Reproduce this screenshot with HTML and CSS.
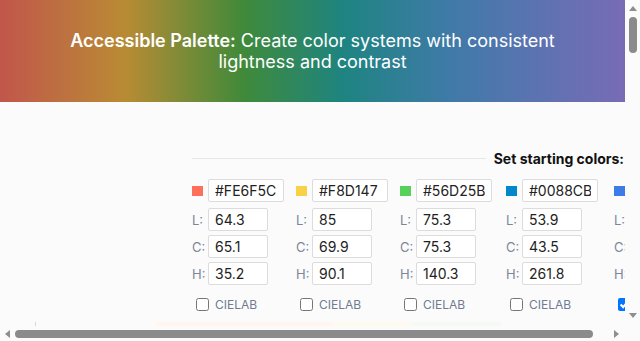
FILE: index.html
```html
<!DOCTYPE html>
<html lang="en">
<head>
  <meta charset="UTF-8" />
  <meta name="viewport" content="width=device-width, initial-scale=1.0"/>
  <title>Accessible Palette</title>
  <link rel="stylesheet" href="styles.css">
</head>
<body>
<div class="app">

  <header class="hero">
    <h1><strong>Accessible Palette:</strong> Create color systems with consistent lightness and contrast</h1>
  </header>

  <main class="page">
    <div class="section-head">
      <div class="rule"></div>
      <h2>Set starting colors:</h2>
    </div>

    <div class="colors">
      <div class="color">
        <div class="hex-row">
          <span class="swatch" style="background:#FE6F5C"></span>
          <input class="hex" value="#FE6F5C" />
        </div>
        <div class="field"><label>L:</label><input value="64.3" /></div>
        <div class="field"><label>C:</label><input value="65.1" /></div>
        <div class="field"><label>H:</label><input value="35.2" /></div>
        <label class="lab"><input type="checkbox" /> CIELAB</label>
      </div>
      <div class="color">
        <div class="hex-row">
          <span class="swatch" style="background:#F8D147"></span>
          <input class="hex" value="#F8D147" />
        </div>
        <div class="field"><label>L:</label><input value="85" /></div>
        <div class="field"><label>C:</label><input value="69.9" /></div>
        <div class="field"><label>H:</label><input value="90.1" /></div>
        <label class="lab"><input type="checkbox" /> CIELAB</label>
      </div>
      <div class="color wide">
        <div class="hex-row">
          <span class="swatch" style="background:#56D25B"></span>
          <input class="hex" value="#56D25B" />
        </div>
        <div class="field"><label>L:</label><input value="75.3" /></div>
        <div class="field"><label>C:</label><input value="75.3" /></div>
        <div class="field"><label>H:</label><input value="140.3" /></div>
        <label class="lab"><input type="checkbox" /> CIELAB</label>
      </div>
      <div class="color wider">
        <div class="hex-row">
          <span class="swatch" style="background:#0088CB"></span>
          <input class="hex" value="#0088CB" />
        </div>
        <div class="field"><label>L:</label><input value="53.9" /></div>
        <div class="field"><label>C:</label><input value="43.5" /></div>
        <div class="field"><label>H:</label><input value="261.8" /></div>
        <label class="lab"><input type="checkbox" /> CIELAB</label>
      </div>
      <div class="color">
        <div class="hex-row">
          <span class="swatch" style="background:#3D7BE8"></span>
          <input class="hex" value="#3D7BE8" />
        </div>
        <div class="field"><label>L:</label><input value="52.6" /></div>
        <div class="field"><label>C:</label><input value="61.2" /></div>
        <div class="field"><label>H:</label><input value="270.4" /></div>
        <label class="lab"><input type="checkbox" checked /> CIELAB</label>
      </div>
    </div>

    <div class="preview">
      <div class="axis"></div>
      <div class="tint tint-red"></div>
      <div class="tint tint-yellow"></div>
      <div class="tint tint-green"></div>
    </div>
  </main>

</div>

<div class="vbar">
  <span class="arrow arrow-up"></span>
  <div class="vtrack"><div class="vthumb"></div></div>
  <span class="arrow arrow-down"></span>
</div>
<div class="hbar">
  <span class="arrow arrow-left"></span>
  <div class="htrack"><div class="hthumb"></div></div>
  <span class="arrow arrow-right"></span>
</div>
<div class="corner"></div>
</body>
</html>
```

FILE: styles.css
```css
html, body {
  margin: 0;
  padding: 0;
  height: 100%;
  overflow: hidden;
}
body {
  font-family: Inter, "Noto Sans", sans-serif;
  background: #fbfbfb;
  color: #222;
  display: grid;
  grid-template-columns: 1fr 15px;
  grid-template-rows: 1fr 15px;
}
.app {
  overflow: hidden;
  min-width: 0;
}

/* scrollbars */
.vbar, .hbar, .corner {
  background: #fbfbfb;
  display: flex;
  align-items: center;
}
.vbar {
  flex-direction: column;
}
.vtrack {
  flex: 1;
  width: 100%;
  padding-top: 2px;
}
.vthumb {
  width: 8px;
  height: 36px;
  margin: 0 auto;
  background: #8b8b8b;
  border-radius: 4px;
}
.htrack {
  flex: 1;
  height: 100%;
  display: flex;
  align-items: center;
}
.hthumb {
  width: 578px;
  height: 8px;
  background: #8b8b8b;
  border-radius: 4px;
}
.arrow {
  width: 0;
  height: 0;
  flex: none;
  border: 0 solid transparent;
}
.arrow-up {
  margin: 6px 0 4px;
  border-width: 0 4.5px 5px;
  border-bottom-color: #8e8e8e;
}
.arrow-down {
  margin: 4px 0 8px;
  border-width: 5px 4.5px 0;
  border-top-color: #8e8e8e;
}
.arrow-left {
  margin: 0 5px 0 5px;
  border-width: 4px 5px 4px 0;
  border-right-color: #8e8e8e;
}
.arrow-right {
  margin: 0 6px 0 5px;
  border-width: 4px 0 4px 5px;
  border-left-color: #8e8e8e;
}

/* header */
.hero {
  background: linear-gradient(90deg, #c1564b 0%, #b98b34 20%, #3f8a3a 39%, #1e8481 55%, #3f7aa8 72%, #5874b0 84%, #786bb5 100%);
  padding: 30px 40px 30px;
  text-align: center;
}
.hero h1 {
  margin: 0;
  color: #fff;
  font-size: 18px;
  font-weight: 400;
  line-height: 21px;
}
.hero strong {
  font-weight: 600;
}

/* starting colors */
.page {
  width: 453px;
  padding: 48px 0 40px 192px;
}
.section-head {
  display: flex;
  align-items: center;
  padding-right: 21px;
}
.rule {
  flex: 1;
  border-top: 1px solid #e6e6e6;
  margin-right: 8px;
}
.section-head h2 {
  margin: 0;
  font-size: 14px;
  line-height: 17px;
  font-weight: 700;
  color: #111;
}
.colors {
  display: flex;
  gap: 12px;
  margin-top: 12px;
}
.color {
  flex: none;
  width: 92px;
}
.color.wide {
  width: 94px;
}
.color.wider {
  width: 96px;
}
.hex-row {
  display: flex;
  align-items: center;
  gap: 5px;
}
.swatch {
  width: 11px;
  height: 10px;
  flex: none;
}
input {
  font-family: Inter, "Noto Sans", sans-serif;
  font-size: 14px;
  color: #222;
  background: #fff;
  border: 1px solid #dcdcdc;
  border-radius: 2px;
  padding: 2px 6px;
  height: 23px;
  box-sizing: border-box;
}
.hex {
  width: 76px;
}
.field {
  display: flex;
  align-items: center;
  margin-top: 4px;
}
.hex-row + .field {
  margin-top: 6px;
}
.field label {
  width: 16px;
  font-size: 13px;
  color: #7d8699;
}
.field input {
  width: 60px;
}
.lab {
  display: flex;
  align-items: center;
  margin-top: 10px;
  font-size: 12px;
  color: #6e7b93;
  gap: 3px;
}
.lab input {
  height: 13px;
  width: 13px;
  margin: 3px 3px 3px 4px;
}
.preview {
  display: flex;
  margin: 8px 0 0 -192px;
  height: 14px;
  width: 645px;
}
.axis {
  width: 1px;
  margin-left: 35px;
  background: #d8d8d8;
}
.tint {
  height: 8px;
}
.tint-red {
  margin-left: 120px;
  width: 175px;
  background: #fff6ef;
}
.tint-yellow {
  width: 80px;
  background: #fffaee;
}
.tint-green {
  width: 90px;
  background: #f5fbf3;
}
```
